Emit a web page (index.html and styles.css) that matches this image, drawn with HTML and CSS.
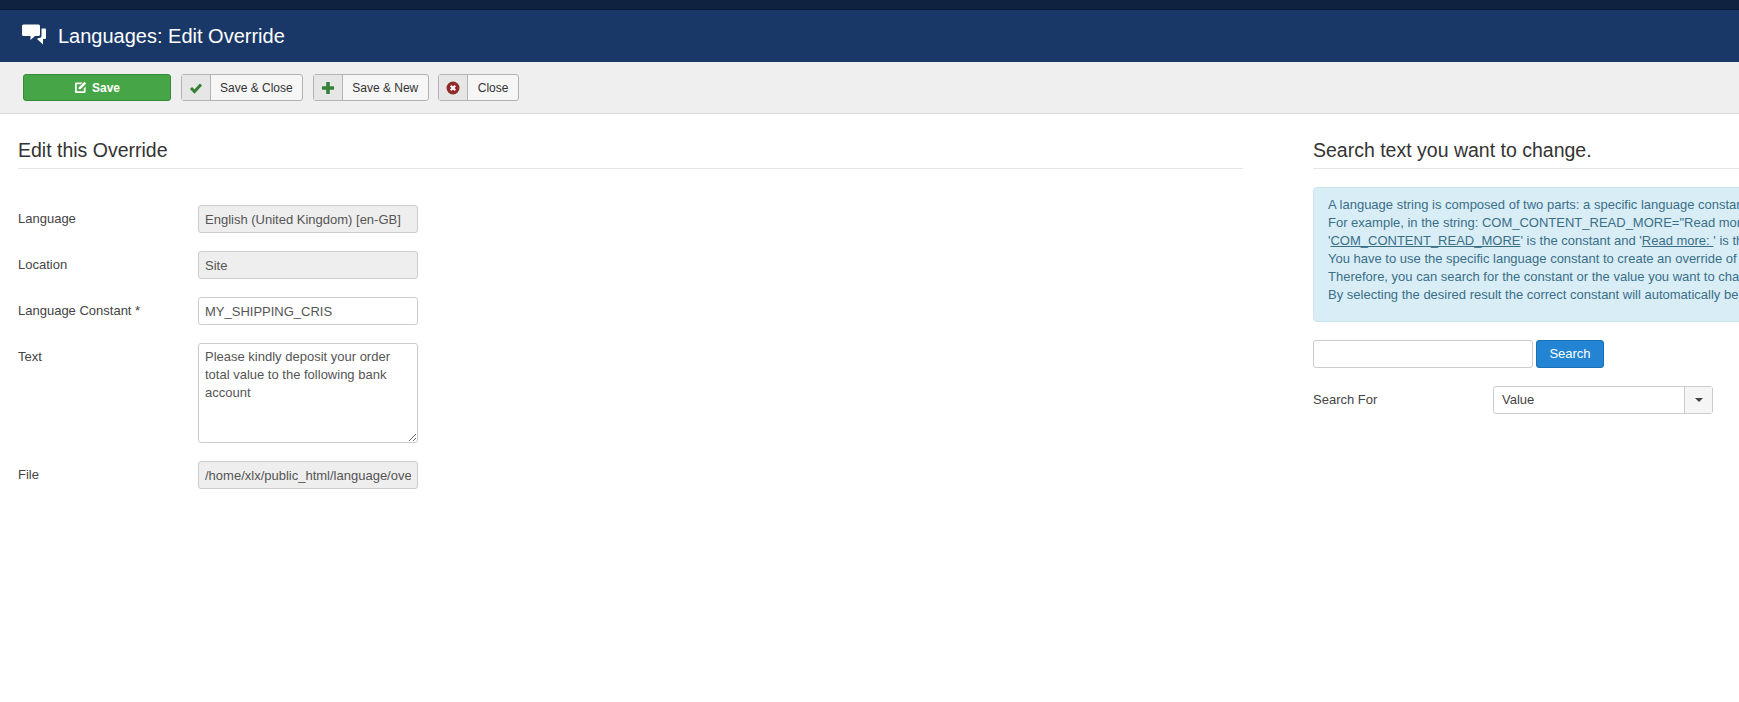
FILE: index.html
```html
<!doctype html>
<html lang="en">
  <head>
    <meta charset="UTF-8" />
    <meta name="viewport" content="width=device-width, initial-scale=1.0" />
    <title>Languages: Edit Override</title>
    <link rel="stylesheet" href="styles.css">
  </head>
  <body>
    <div class="top-nav"></div>

    <header class="page-title">
      <svg class="title-icon" viewBox="0 0 24 20" width="24" height="21">
        <path fill="#fff" d="M1.500 0h15A1.500 1.500 0 0 1 18 1.500v8.500a1.500 1.500 0 0 1-1.500 1.500H13L8.500 15.500v-4H1.500A1.500 1.500 0 0 1 0 10V1.500A1.500 1.500 0 0 1 1.500 0z"/>
        <path fill="#fff" d="M19.500 4H23a1 1 0 0 1 1 1v8.500a1 1 0 0 1-1 1h-2V20l-6-5.500 1.500-1h1a2 2 0 0 0 2-2z"/>
      </svg>
      <h1>Languages: Edit Override</h1>
    </header>

    <div class="toolbar">
      <button class="btn btn-save">
        <svg viewBox="0 0 14 14" width="13" height="13">
          <path fill="#fff" d="M2.500 1.500H9L7.500 3.500h-4.500v7.500h7.500V8l2-2v5.500a1.500 1.500 0 0 1-1.500 1.500H2.500A1.500 1.500 0 0 1 1 11.500V3a1.500 1.500 0 0 1 1.500-1.500z"/>
          <path fill="#fff" d="M11.200 0.800l2 2-6.200 6.200H5V7z"/>
        </svg>
        Save
      </button>
      <button class="btn btn-split">
        <span class="btn-icon">
          <svg viewBox="0 0 14 14" width="14" height="14"><path fill="none" stroke="#378137" stroke-width="3" d="M2 7l3.500 3.500L12 3.500"/></svg>
        </span>
        <span class="btn-text">Save &amp; Close</span>
      </button>
      <button class="btn btn-split">
        <span class="btn-icon">
          <svg viewBox="0 0 14 14" width="14" height="14"><path fill="none" stroke="#378137" stroke-width="3.600" d="M7 1v12M1 7h12"/></svg>
        </span>
        <span class="btn-text">Save &amp; New</span>
      </button>
      <button class="btn btn-split">
        <span class="btn-icon">
          <svg viewBox="0 0 14 14" width="14" height="14"><circle cx="7" cy="7" r="6.500" fill="#8f2a2a"/><path fill="none" stroke="#fff" stroke-width="2" d="M4.700 4.700l4.600 4.600M9.300 4.700l-4.600 4.600"/></svg>
        </span>
        <span class="btn-text">Close</span>
      </button>
    </div>

    <main class="content">
      <section class="col-left">
        <h2 class="section-title">Edit this Override</h2>
        <div class="form-row">
          <label>Language</label>
          <input class="field" type="text" value="English (United Kingdom) [en-GB]" readonly />
        </div>
        <div class="form-row">
          <label>Location</label>
          <input class="field" type="text" value="Site" readonly />
        </div>
        <div class="form-row">
          <label>Language Constant *</label>
          <input class="field editable" type="text" value="MY_SHIPPING_CRIS" />
        </div>
        <div class="form-row">
          <label>Text</label>
          <textarea class="field editable area">Please kindly deposit your order total value to the following bank account</textarea>
        </div>
        <div class="form-row">
          <label>File</label>
          <input class="field" type="text" value="/home/xlx/public_html/language/overrides/en-GB.override.ini" readonly />
        </div>
      </section>

      <section class="col-right">
        <h2 class="section-title">Search text you want to change.</h2>
        <div class="alert">
          A language string is composed of two parts: a specific language constant and its value.<br>
          For example, in the string: COM_CONTENT_READ_MORE="Read more: "<br>
          '<u>COM_CONTENT_READ_MORE</u>' is the constant and '<u>Read more: </u>' is the value.<br>
          You have to use the specific language constant to create an override of this value.<br>
          Therefore, you can search for the constant or the value you want to change with the search field below.<br>
          By selecting the desired result the correct constant will automatically be inserted into the form.
        </div>
        <div class="search-row">
          <input class="field editable" type="text" />
          <button class="btn-search">Search</button>
        </div>
        <div class="form-row">
          <label>Search For</label>
          <div class="select">
            <span class="select-value">Value</span>
            <span class="select-arrow"><b></b></span>
          </div>
        </div>
      </section>
    </main>
  </body>
</html>
```

FILE: styles.css
```css
* {
  box-sizing: border-box;
  margin: 0;
  padding: 0;
  font-family: "Liberation Sans", Arial, sans-serif;
}

html,
body {
  height: 100%;
  overflow: hidden;
}

body {
  background-color: #fff;
  color: #444;
  font-size: 13px;
}

.top-nav {
  height: 10px;
  background-color: #0f2240;
  border-bottom: 1px solid #0b1a33;
}

.page-title {
  display: flex;
  align-items: center;
  height: 52px;
  padding-left: 22px;
  background-color: #1a3867;
}

.title-icon {
  margin: 0 12px 3px 0;
}

.page-title h1 {
  color: #fff;
  font-size: 20px;
  font-weight: 400;
}

.toolbar {
  display: flex;
  align-items: flex-start;
  gap: 9.5px;
  height: 52px;
  padding: 12px 0 0 23px;
  background-color: #efefef;
  border-bottom: 1px solid #d9d9d9;
}

.btn {
  display: flex;
  align-items: center;
  height: 27px;
  font-size: 12px;
  color: #333;
  background-color: #f6f6f6;
  border: 1px solid #b3b3b3;
  border-radius: 3px;
}

.btn-save {
  justify-content: center;
  gap: 5px;
  width: 148px;
  color: #fff;
  font-weight: 700;
  background-color: #46a546;
  border-color: #358a35;
}

.btn-icon {
  display: flex;
  align-items: center;
  justify-content: center;
  width: 29px;
  height: 100%;
  background-color: #e6e6e6;
  border-right: 1px solid #b3b3b3;
}

.btn-text {
  padding: 0 9.5px;
}

.content {
  display: flex;
  padding: 22px 0 0 18px;
}

.col-left {
  flex: 0 0 1225px;
  margin-right: 70px;
}

.col-right {
  flex: 0 0 1225px;
}

.section-title {
  height: 33px;
  margin-bottom: 18px;
  padding-top: 2px;
  color: #333;
  font-size: 19.5px;
  font-weight: 400;
  line-height: 24px;
  border-bottom: 1px solid #e5e5e5;
}

.col-left .section-title {
  margin-bottom: 36px;
}

.form-row {
  display: flex;
  align-items: flex-start;
  margin-bottom: 18px;
}

.form-row label {
  width: 180px;
  line-height: 27px;
}

.field {
  display: block;
  width: 220px;
  height: 28px;
  padding: 0 6px;
  font-size: 13px;
  color: #555;
  background-color: #eee;
  border: 1px solid #ccc;
  border-radius: 3px;
}

.editable {
  background-color: #fff;
}

.area {
  height: 100px;
  padding: 4px 6px;
  line-height: 18px;
}

.alert {
  height: 135px;
  margin-bottom: 18px;
  padding: 8px 14px;
  color: #3a6f87;
  line-height: 18px;
  white-space: nowrap;
  background-color: #d9edf7;
  border: 1px solid #c9e6f2;
  border-radius: 4px;
}

.search-row {
  display: flex;
  gap: 3px;
  margin-bottom: 18px;
}

.btn-search {
  width: 68px;
  height: 28px;
  padding-bottom: 2px;
  font-size: 13px;
  color: #fff;
  background-color: #2384d3;
  border: 1px solid #1a6fb5;
  border-radius: 3px;
}

.select {
  display: flex;
  width: 220px;
  height: 28px;
  background-color: #fff;
  border: 1px solid #ccc;
  border-radius: 3px;
}

.select-value {
  flex: 1;
  padding-left: 8px;
  line-height: 26px;
  color: #444;
}

.select-arrow {
  display: flex;
  align-items: center;
  justify-content: center;
  width: 28px;
  background-color: #f5f5f5;
  border-left: 1px solid #ccc;
}

.select-arrow b {
  border-top: 4px solid #444;
  border-left: 4px solid transparent;
  border-right: 4px solid transparent;
}
```
